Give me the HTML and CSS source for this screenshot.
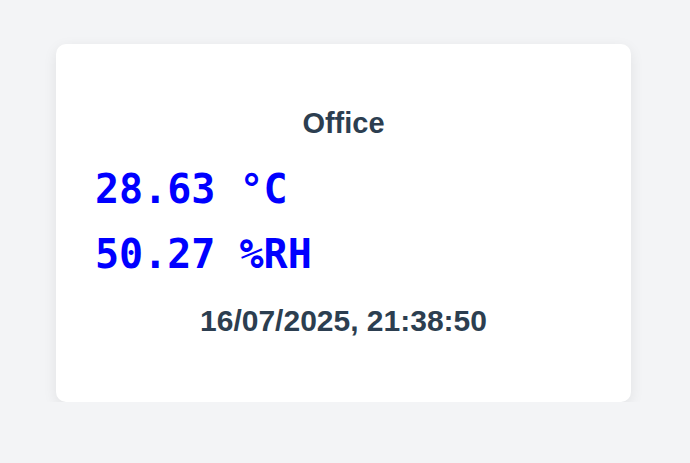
FILE: index.html
```html
<!DOCTYPE html>
<html>
<head>
<meta charset="utf-8">
<link rel="stylesheet" href="styles.css">
</head>
<body>
<div class="page">
  <div class="card">
    <h2 class="title">Office</h2>
    <div class="readings">
      <div class="reading">28.63 °C</div>
      <div class="reading">50.27 %RH</div>
    </div>
    <div class="stamp">16/07/2025, 21:38:50</div>
  </div>
</div>
</body>
</html>
```
FILE: styles.css
```css
html, body {
  margin: 0;
  padding: 0;
  background: #f3f4f6;
}
.page {
  padding: 44px 59px 0 56px;
}
.card {
  background: #fff;
  border-radius: 10px;
  box-shadow: 0 4px 14px rgba(0,0,0,0.08);
  height: 358px;
  box-sizing: border-box;
  padding: 61px 39px 0 39px;
  display: flex;
  flex-direction: column;
  font-family: "Liberation Sans", Arial, sans-serif;
  color: #2c3e50;
}
.title {
  margin: 0;
  text-align: center;
  font-size: 29px;
  font-weight: bold;
  line-height: 36px;
}
.readings {
  margin-top: 16px;
}
.reading {
  font-family: "DejaVu Sans Mono", monospace;
  font-weight: bold;
  font-size: 40px;
  color: #0000ff;
  line-height: 65px;
}
.stamp {
  margin-top: 16px;
  text-align: center;
  font-size: 30px;
  font-weight: bold;
  line-height: 36px;
}
```
